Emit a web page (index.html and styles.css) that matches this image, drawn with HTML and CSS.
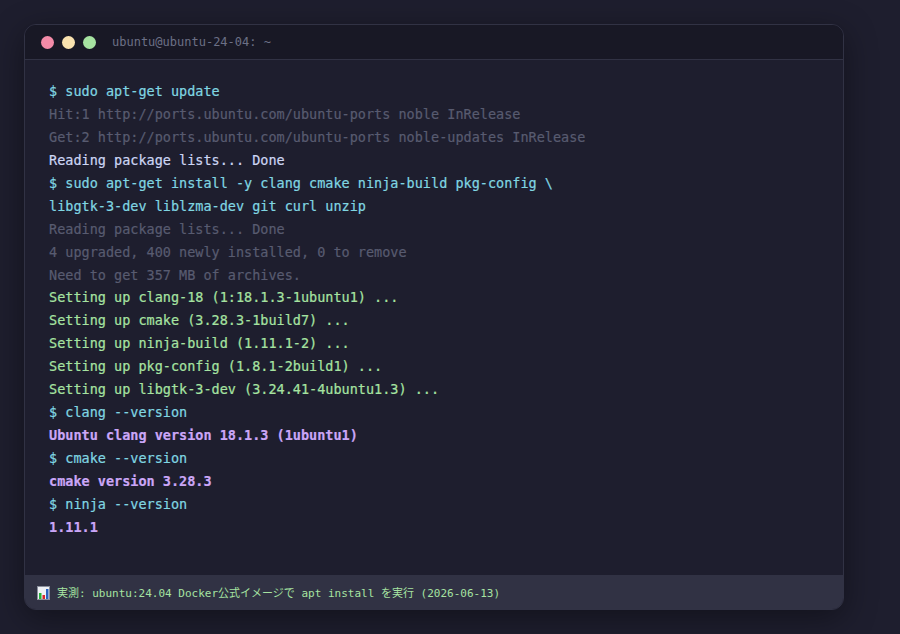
FILE: index.html
```html
<!DOCTYPE html>
<html lang="ja">

<head>
    <meta charset="UTF-8">
    <meta name="viewport" content="width=device-width, initial-scale=1.0">
    <title>Terminal</title>
    <link rel="stylesheet" href="styles.css">
</head>

<body>
    <div class="terminal">
        <div class="title-bar">
            <div class="dots">
                <span class="dot red"></span>
                <span class="dot yellow"></span>
                <span class="dot green"></span>
            </div>
            <span class="title">ubuntu@ubuntu-24-04: ~</span>
        </div>
        <div class="output">
            <div class="cmd">$ sudo apt-get update</div>
            <div class="dim">Hit:1 http://ports.ubuntu.com/ubuntu-ports noble InRelease</div>
            <div class="dim">Get:2 http://ports.ubuntu.com/ubuntu-ports noble-updates InRelease</div>
            <div class="plain">Reading package lists... Done</div>
            <div class="cmd">$ sudo apt-get install -y clang cmake ninja-build pkg-config \</div>
            <div class="cmd">libgtk-3-dev liblzma-dev git curl unzip</div>
            <div class="dim">Reading package lists... Done</div>
            <div class="dim">4 upgraded, 400 newly installed, 0 to remove</div>
            <div class="dim">Need to get 357 MB of archives.</div>
            <div class="ok">Setting up clang-18 (1:18.1.3-1ubuntu1) ...</div>
            <div class="ok">Setting up cmake (3.28.3-1build7) ...</div>
            <div class="ok">Setting up ninja-build (1.11.1-2) ...</div>
            <div class="ok">Setting up pkg-config (1.8.1-2build1) ...</div>
            <div class="ok">Setting up libgtk-3-dev (3.24.41-4ubuntu1.3) ...</div>
            <div class="cmd">$ clang --version</div>
            <div class="ver">Ubuntu clang version 18.1.3 (1ubuntu1)</div>
            <div class="cmd">$ cmake --version</div>
            <div class="ver">cmake version 3.28.3</div>
            <div class="cmd">$ ninja --version</div>
            <div class="ver">1.11.1</div>
        </div>
        <div class="note">
            <svg class="note-icon" viewBox="0 0 13 14" width="13" height="14">
                <rect x="0.5" y="0.5" width="12" height="13" fill="#eef1f5" stroke="#8a8f9c"/>
                <rect x="2" y="7" width="2.5" height="6" fill="#27b43c"/>
                <rect x="5.5" y="9" width="2.5" height="4" fill="#d8262c"/>
                <rect x="9" y="3" width="2.5" height="10" fill="#2a62c0"/>
            </svg>
            <span>実測: ubuntu:24.04 Docker公式イメージで apt install を実行 (2026-06-13)</span>
        </div>
    </div>
</body>

</html>
```

FILE: styles.css
```css
body {
    margin: 0;
    padding: 24px 56px 24px 24px;
    background-color: #1e1e2e;
    font-family: "DejaVu Sans Mono", "Noto Sans CJK JP", monospace;
}

.terminal {
    display: flex;
    flex-direction: column;
    height: 586px;
    box-sizing: border-box;
    border: 1px solid #313244;
    border-radius: 12px;
    background-color: #1e1e2e;
    box-shadow: 0 8px 32px rgba(0, 0, 0, 0.4);
    overflow: hidden;
}

.title-bar {
    display: flex;
    align-items: center;
    gap: 16px;
    box-sizing: border-box;
    height: 35px;
    flex-shrink: 0;
    padding: 0 16px;
    background-color: #181825;
    border-bottom: 1px solid #313244;
}

.dots {
    display: flex;
    gap: 8px;
}

.dot {
    width: 13px;
    height: 13px;
    border-radius: 50%;
}

.red {
    background-color: #f38ba8;
}

.yellow {
    background-color: #f9e2af;
}

.green {
    background-color: #a6e3a1;
}

.title {
    font-size: 12px;
    color: #6c7086;
}

.output {
    flex: 1;
    padding: 20px 24px;
    font-size: 13.5px;
    line-height: 1.7;
    -webkit-text-stroke: 0.2px;
}

.output div {
    white-space: pre;
}

.cmd {
    color: #80d6e2;
}

.dim {
    color: #585b70;
}

.plain {
    color: #cdd6f4;
}

.ok {
    color: #a6e3a1;
}

.ver {
    color: #cba6f7;
    font-weight: bold;
}

.note {
    display: flex;
    align-items: center;
    gap: 7px;
    height: 34px;
    flex-shrink: 0;
    padding: 0 12px;
    background-color: #313244;
    font-size: 11px;
    color: #a6e3a1;
}

.note-icon {
    margin-top: 2px;
}
```
